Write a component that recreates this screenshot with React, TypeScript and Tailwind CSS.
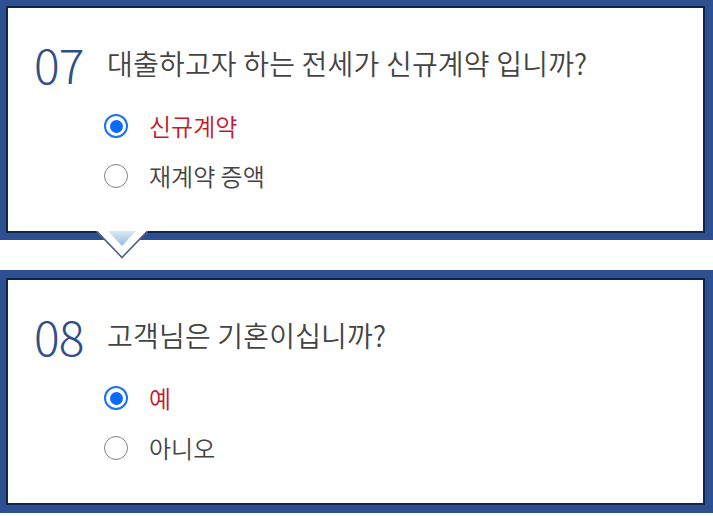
import React from 'react';

interface Option {
  label: string;
  checked: boolean;
}

interface QuestionProps {
  num: string;
  title: string;
  options: Option[];
  outerClass: string;
}

function Radio({ checked }: { checked: boolean }) {
  if (checked) {
    return (
      <span className="flex h-6 w-6 shrink-0 items-center justify-center rounded-full border-2 border-[#1872f2] bg-white">
        <span className="h-[13px] w-[13px] rounded-full bg-[#0b6cf2]" />
      </span>
    );
  }
  return <span className="h-6 w-6 shrink-0 rounded-full border border-[#808080] bg-white" />;
}

function Question({ num, title, options, outerClass }: QuestionProps) {
  return (
    <div className={`bg-[#2f5090] pl-[6px] pr-[8px] ${outerClass}`}>
      <div className="h-[227px] border-2 border-[#0c2748] bg-white pt-[27px]">
        <div className="flex h-[56px] items-center pl-[26px]">
          <span className="w-[73px] text-[48px] leading-none font-light text-[#2e4f8a] tracking-[-1px]">
            {num}
          </span>
          <span className="text-[28px] leading-none text-[#444] font-[350] tracking-[0.2px]">
            {title}
          </span>
        </div>
        <ul className="mt-[10px] pl-[96px]">
          {options.map((o) => (
            <li key={o.label} className="flex h-[50px] items-center gap-[21px]">
              <Radio checked={o.checked} />
              <span
                className={`text-[24px] leading-none font-[350] ${
                  o.checked ? 'text-[#c4182f]' : 'text-[#444]'
                }`}
              >
                {o.label}
              </span>
            </li>
          ))}
        </ul>
      </div>
    </div>
  );
}

function Arrow() {
  return (
    <svg
      className="absolute left-[96px] top-[231px]"
      width="52"
      height="28"
      viewBox="0 0 52 28"
    >
      <defs>
        <linearGradient id="arrowFill" x1="0" y1="0" x2="0" y2="1">
          <stop offset="0%" stopColor="#dce9f3" />
          <stop offset="100%" stopColor="#96bdd7" />
        </linearGradient>
      </defs>
      <polygon points="0,0 52,0 26,27" fill="#ffffff" />
      <polygon points="12,0 40,0 26,15" fill="url(#arrowFill)" />
      <path d="M0.5,0 L26,26.5 L51.5,0" fill="none" stroke="#52627a" strokeWidth="1.6" />
    </svg>
  );
}

export default function App() {
  return (
    <div
      className="relative h-[516px] w-[713px] bg-white"
      style={{ fontFamily: '"Noto Sans CJK KR", "Noto Sans", sans-serif' }}
    >
      <Question
        num="07"
        title="대출하고자 하는 전세가 신규계약 입니까?"
        outerClass="pt-[6px] pb-[7px]"
        options={[
          { label: '신규계약', checked: true },
          { label: '재계약 증액', checked: false },
        ]}
      />
      <div className="h-[30px]" />
      <Question
        num="08"
        title="고객님은 기혼이십니까?"
        outerClass="pt-[8px] pb-[8px]"
        options={[
          { label: '예', checked: true },
          { label: '아니오', checked: false },
        ]}
      />
      <Arrow />
    </div>
  );
}
